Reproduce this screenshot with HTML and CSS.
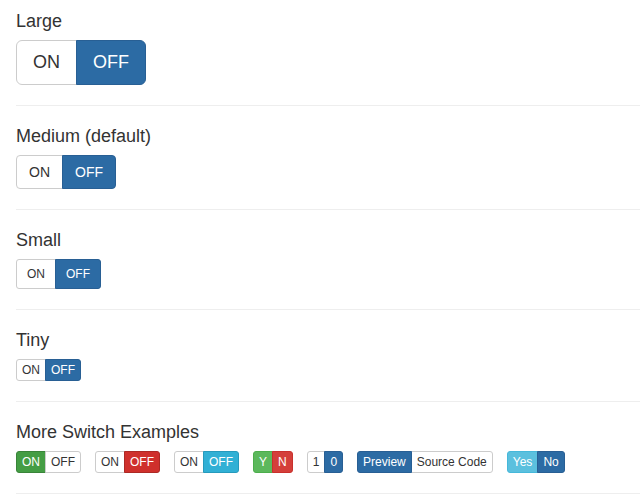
FILE: index.html
```html
<!DOCTYPE html>
<html>
<head>
<meta charset="utf-8">
<link rel="stylesheet" href="styles.css">
</head>
<body>
<div class="page">
  <section class="sec first">
    <h4 class="title">Large</h4>
    <div class="sw sw-lg">
      <span class="b">ON</span><span class="b primary">OFF</span>
    </div>
  </section>
  <section class="sec">
    <h4 class="title">Medium (default)</h4>
    <div class="sw sw-md">
      <span class="b">ON</span><span class="b primary">OFF</span>
    </div>
  </section>
  <section class="sec">
    <h4 class="title">Small</h4>
    <div class="sw sw-sm">
      <span class="b">ON</span><span class="b primary">OFF</span>
    </div>
  </section>
  <section class="sec">
    <h4 class="title">Tiny</h4>
    <div class="sw sw-xs">
      <span class="b">ON</span><span class="b primary">OFF</span>
    </div>
  </section>
  <section class="sec">
    <h4 class="title">More Switch Examples</h4>
    <div class="row">
      <div class="sw sw-xs"><span class="b success-act">ON</span><span class="b">OFF</span></div>
      <div class="sw sw-xs"><span class="b">ON</span><span class="b danger-act">OFF</span></div>
      <div class="sw sw-xs"><span class="b">ON</span><span class="b info-act">OFF</span></div>
      <div class="sw sw-xs"><span class="b success">Y</span><span class="b danger">N</span></div>
      <div class="sw sw-xs"><span class="b">1</span><span class="b primary">0</span></div>
      <div class="sw sw-xs"><span class="b primary">Preview</span><span class="b">Source Code</span></div>
      <div class="sw sw-xs"><span class="b info">Yes</span><span class="b primary">No</span></div>
    </div>
  </section>
</div>
</body>
</html>
```
FILE: styles.css
```css
html, body {
  margin: 0;
  padding: 0;
  background: #fff;
}
body {
  font-family: "Liberation Sans", Arial, sans-serif;
  color: #333;
}
.page {
  padding-left: 16px;
}
.sec {
  padding: 20px 0 20px;
  border-bottom: 1px solid #eee;
}
.sec.first {
  padding-top: 11px;
}
.title {
  margin: 0 0 9px;
  font-size: 18px;
  line-height: 20px;
  font-weight: normal;
  color: #333;
}
.row {
  display: flex;
  gap: 14px;
}
.sw {
  display: inline-flex;
  vertical-align: top;
}
.b {
  display: block;
  border: 1px solid #ccc;
  background: #fff;
  color: #333;
  white-space: nowrap;
}
.b + .b {
  margin-left: -1px;
}
.sw-lg .b {
  font-size: 18px;
  line-height: 23px;
  padding: 10px 16px;
}
.sw-lg .b:first-child { border-radius: 6px 0 0 6px; }
.sw-lg .b:last-child { border-radius: 0 6px 6px 0; }
.sw-md .b {
  font-size: 14px;
  line-height: 20px;
  padding: 6px 12px;
}
.sw-md .b:first-child { border-radius: 4px 0 0 4px; }
.sw-md .b:last-child { border-radius: 0 4px 4px 0; }
.sw-sm .b {
  font-size: 12px;
  line-height: 18px;
  padding: 5px 10px;
}
.sw-sm .b:first-child { border-radius: 3px 0 0 3px; }
.sw-sm .b:last-child { border-radius: 0 3px 3px 0; }
.sw-xs .b {
  font-size: 12px;
  line-height: 18px;
  padding: 1px 5px;
}
.sw-xs .b:first-child { border-radius: 3px 0 0 3px; }
.sw-xs .b:last-child { border-radius: 0 3px 3px 0; }

.primary {
  background: #2c6ba4;
  border-color: #285f94;
  color: #fff;
  position: relative;
}
.success-act {
  background: #449d44;
  border-color: #398439;
  color: #fff;
}
.success {
  background: #5cb85c;
  border-color: #4cae4c;
  color: #fff;
}
.danger-act {
  background: #cf302c;
  border-color: #ac2925;
  color: #fff;
}
.danger {
  background: #d43f3a;
  border-color: #c9302c;
  color: #fff;
}
.info-act {
  background: #31b0d5;
  border-color: #269abc;
  color: #fff;
}
.info {
  background: #5bc0de;
  border-color: #46b8da;
  color: #fff;
}
```
